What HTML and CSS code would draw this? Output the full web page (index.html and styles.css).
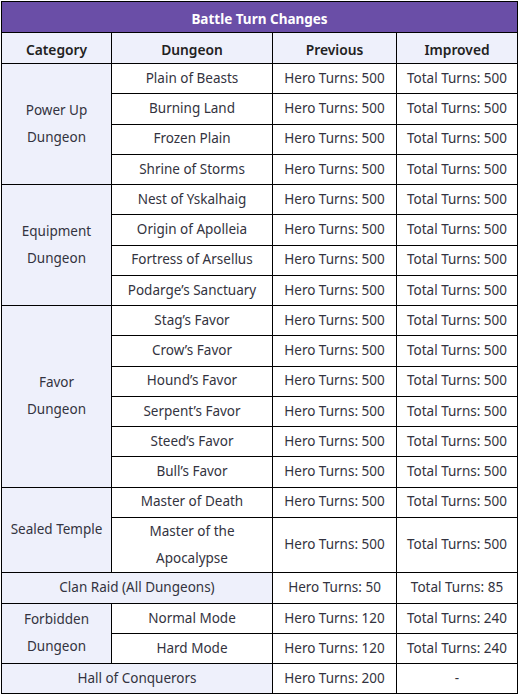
FILE: index.html
```html
<!DOCTYPE html>
<html>
<head>
<meta charset="utf-8">
<link rel="stylesheet" href="styles.css">
</head>
<body>
<table class="turns">
  <colgroup>
    <col class="c1"><col class="c2"><col class="c3"><col class="c4">
  </colgroup>
  <tr><th class="title" colspan="4">Battle Turn Changes</th></tr>
  <tr class="head"><th>Category</th><th>Dungeon</th><th>Previous</th><th>Improved</th></tr>
  <tr><td class="cat" rowspan="4">Power Up<br>Dungeon</td><td>Plain of Beasts</td><td>Hero Turns: 500</td><td>Total Turns: 500</td></tr>
  <tr><td>Burning Land</td><td>Hero Turns: 500</td><td>Total Turns: 500</td></tr>
  <tr><td>Frozen Plain</td><td>Hero Turns: 500</td><td>Total Turns: 500</td></tr>
  <tr><td>Shrine of Storms</td><td>Hero Turns: 500</td><td>Total Turns: 500</td></tr>
  <tr><td class="cat" rowspan="4">Equipment<br>Dungeon</td><td>Nest of Yskalhaig</td><td>Hero Turns: 500</td><td>Total Turns: 500</td></tr>
  <tr><td>Origin of Apolleia</td><td>Hero Turns: 500</td><td>Total Turns: 500</td></tr>
  <tr><td>Fortress of Arsellus</td><td>Hero Turns: 500</td><td>Total Turns: 500</td></tr>
  <tr><td>Podarge’s Sanctuary</td><td>Hero Turns: 500</td><td>Total Turns: 500</td></tr>
  <tr><td class="cat" rowspan="6">Favor<br>Dungeon</td><td>Stag’s Favor</td><td>Hero Turns: 500</td><td>Total Turns: 500</td></tr>
  <tr><td>Crow’s Favor</td><td>Hero Turns: 500</td><td>Total Turns: 500</td></tr>
  <tr><td>Hound’s Favor</td><td>Hero Turns: 500</td><td>Total Turns: 500</td></tr>
  <tr><td>Serpent’s Favor</td><td>Hero Turns: 500</td><td>Total Turns: 500</td></tr>
  <tr><td>Steed’s Favor</td><td>Hero Turns: 500</td><td>Total Turns: 500</td></tr>
  <tr><td>Bull’s Favor</td><td>Hero Turns: 500</td><td>Total Turns: 500</td></tr>
  <tr><td class="cat" rowspan="2">Sealed Temple</td><td>Master of Death</td><td>Hero Turns: 500</td><td>Total Turns: 500</td></tr>
  <tr><td>Master of the<br>Apocalypse</td><td>Hero Turns: 500</td><td>Total Turns: 500</td></tr>
  <tr><td class="cat" colspan="2">Clan Raid (All Dungeons)</td><td>Hero Turns: 50</td><td>Total Turns: 85</td></tr>
  <tr><td class="cat" rowspan="2">Forbidden<br>Dungeon</td><td>Normal Mode</td><td>Hero Turns: 120</td><td>Total Turns: 240</td></tr>
  <tr><td>Hard Mode</td><td>Hero Turns: 120</td><td>Total Turns: 240</td></tr>
  <tr><td class="cat" colspan="2">Hall of Conquerors</td><td>Hero Turns: 200</td><td>-</td></tr>
</table>
</body>
</html>
```
FILE: styles.css
```css
html, body {
  margin: 0;
  padding: 0;
  background: #ffffff;
}
body {
  padding: 1px;
  font-family: "Noto Sans", "Open Sans", sans-serif;
  font-size: 13.5px;
  color: #333340;
}
.turns {
  border-collapse: collapse;
  width: 516px;
  table-layout: fixed;
}
.c1 { width: 110px; }
.c2 { width: 161px; }
.c3 { width: 124px; }
.c4 { width: 121px; }
.turns th,
.turns td {
  border: 1px solid #000;
  text-align: center;
  vertical-align: middle;
  padding: 0;
  line-height: 27.3px;
  height: 29.25px;
}
.turns th {
  padding-top: 3.5px;
  line-height: 26px;
  height: 26.5px;
}
.turns .title {
  background: #6a4ea7;
  color: #ffffff;
  font-weight: 700;
  font-size: 13.5px;
}
.head th {
  background: #eef0fb;
  font-weight: 600;
  font-size: 13.8px;
  color: #222;
}
.turns .cat {
  background: #eef0fb;
}
```
